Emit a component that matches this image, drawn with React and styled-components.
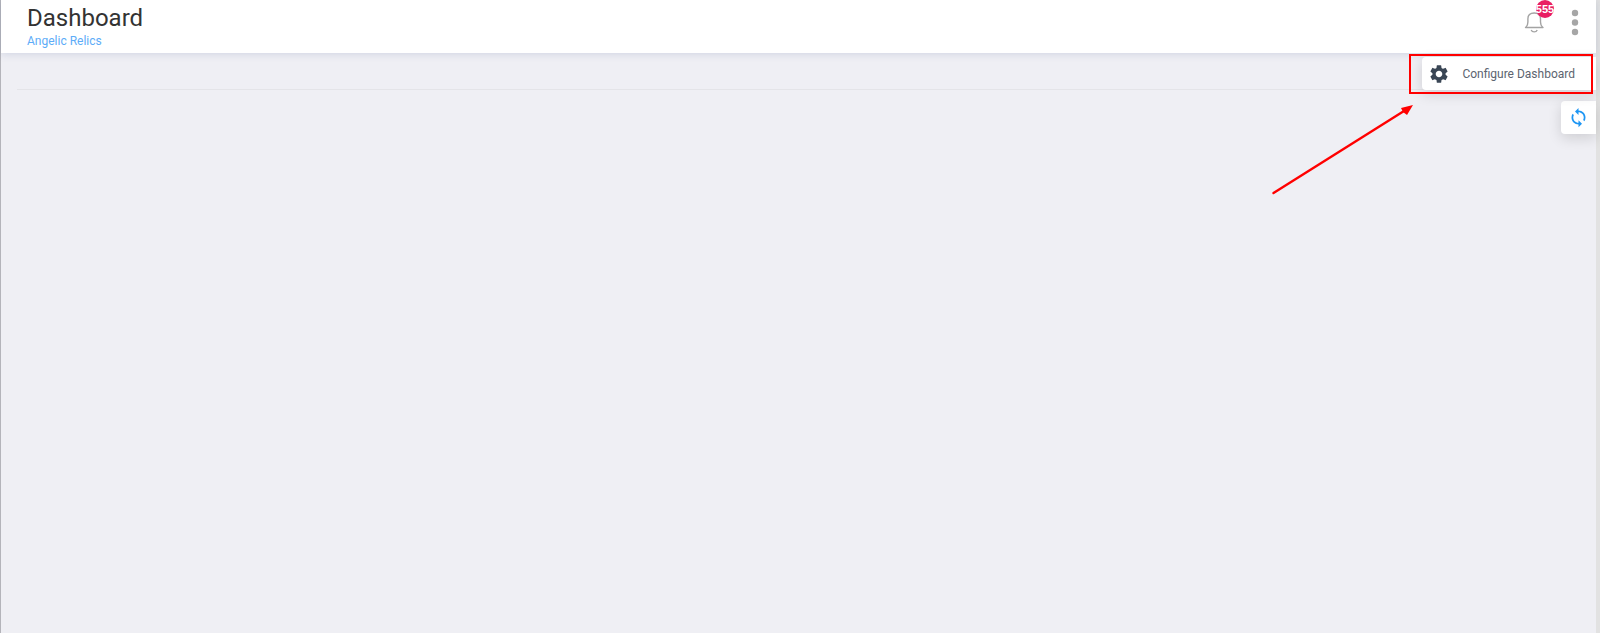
import React from 'react';
import styled, { createGlobalStyle } from 'styled-components';
import { MdSettings, MdSync } from 'react-icons/md';

const GlobalStyle = createGlobalStyle`
  * {
    box-sizing: border-box;
  }

  body {
    margin: 0;
    background: #efeff4;
    font-family: Roboto, 'Liberation Sans', sans-serif;
  }
`;

const Page = styled.div`
  min-height: 100vh;
  border-left: 1px solid #b4b4ba;
  border-right: 4px solid #e2e2e2;
`;

const Header = styled.header`
  display: flex;
  justify-content: space-between;
  height: 53px;
  padding: 4px 14px 0 26px;
  background: #fff;
  box-shadow: 0 1px 8px rgba(60, 90, 150, 0.18);
`;

const Title = styled.h1`
  margin: 0;
  color: #333;
  font-size: 24px;
  font-weight: 400;
  line-height: 28px;
`;

const AccountLink = styled.a`
  display: block;
  color: #5dacf8;
  font-size: 12px;
  line-height: 18px;
  text-decoration: none;
`;

const HeaderActions = styled.div`
  display: flex;
  align-items: flex-start;
  gap: 14px;
  padding-top: 4px;
`;

const IconButton = styled.button`
  position: relative;
  display: flex;
  padding: 0;
  border: 0;
  background: none;
  cursor: pointer;
`;

const Badge = styled.span`
  position: absolute;
  top: -8px;
  right: 0;
  width: 18px;
  height: 18px;
  border-radius: 50%;
  background: #e91e63;
  color: #fff;
  display: flex;
  justify-content: center;
  font-size: 11px;
  font-weight: 700;
  line-height: 18px;
`;

const Toolbar = styled.div`
  display: flex;
  align-items: flex-start;
  justify-content: flex-end;
  height: 37px;
  margin-left: 16px;
  padding-top: 4px;
  border-bottom: 1px solid #e4e4e8;
`;

const SideButton = styled.button`
  display: flex;
  align-items: center;
  gap: 12px;
  height: 33px;
  padding: 0 ${(props) => (props.$wide ? '21px 0 6px' : '7px')};
  border: 0;
  border-radius: 4px 0 0 4px;
  background: #fff;
  box-shadow: 0 4px 14px rgba(0, 0, 0, 0.14);
  color: ${(props) => props.$color};
  font-family: inherit;
  font-size: 12px;
  cursor: pointer;
`;

const ButtonLabel = styled.span`
  color: #5c6470;
`;

const Highlight = styled.div`
  position: relative;
  display: flex;

  &::after {
    content: '';
    position: absolute;
    inset: -3px 3px -4px -13px;
    border: 2px solid #f00;
    pointer-events: none;
  }
`;

const Arrow = styled.svg`
  position: absolute;
  top: 47px;
  right: 182px;
  pointer-events: none;
`;

const SideActions = styled.div`
  display: flex;
  justify-content: flex-end;
  padding-top: 11px;
`;

const Dashboard = () => {
  return (
    <Page>
      <GlobalStyle />
      <Header>
        <div>
          <Title>Dashboard</Title>
          <AccountLink href="#account">Angelic Relics</AccountLink>
        </div>
        <HeaderActions>
          <IconButton aria-label="Notifications">
            <svg width="30" height="26" viewBox="0 0 30 26" fill="none" stroke="#a3a3a3" strokeWidth="1.4">
              <path d="M1.5 19.5h17.5" strokeLinecap="round" />
              <path d="M2 19.2c1.6-1.8 1.9-3.2 1.9-5.2v-3.2C3.9 7 6.3 5 10.2 5s6.3 2 6.3 5.8V14c0 2 .3 3.4 2 5.2" />
              <path d="M7.2 21.9c.6 1.5 1.7 2 3 2s2.4-.5 3-2" />
            </svg>
            <Badge>555</Badge>
          </IconButton>
          <IconButton aria-label="More options">
            <svg width="14" height="28" viewBox="0 0 14 28" fill="#a6a6a6">
              <circle cx="7" cy="5" r="3.2" />
              <circle cx="7" cy="14.5" r="3.2" />
              <circle cx="7" cy="24" r="3.2" />
            </svg>
          </IconButton>
        </HeaderActions>
      </Header>
      <Toolbar>
        <Highlight>
          <SideButton $wide $color="#3a4655">
            <MdSettings size={22} />
            <ButtonLabel>Configure Dashboard</ButtonLabel>
          </SideButton>
          <Arrow width="142" height="92" viewBox="0 0 142 92">
            <path d="M1.5 89L132 7" stroke="#f00" strokeWidth="2.4" strokeLinecap="round" />
            <path d="M141 1l-12 3 2 4 4 3z" fill="#f00" />
          </Arrow>
        </Highlight>
      </Toolbar>
      <SideActions>
        <SideButton $color="#1e96f3" aria-label="Refresh">
          <MdSync size={21} />
        </SideButton>
      </SideActions>
    </Page>
  );
};

export default Dashboard;
